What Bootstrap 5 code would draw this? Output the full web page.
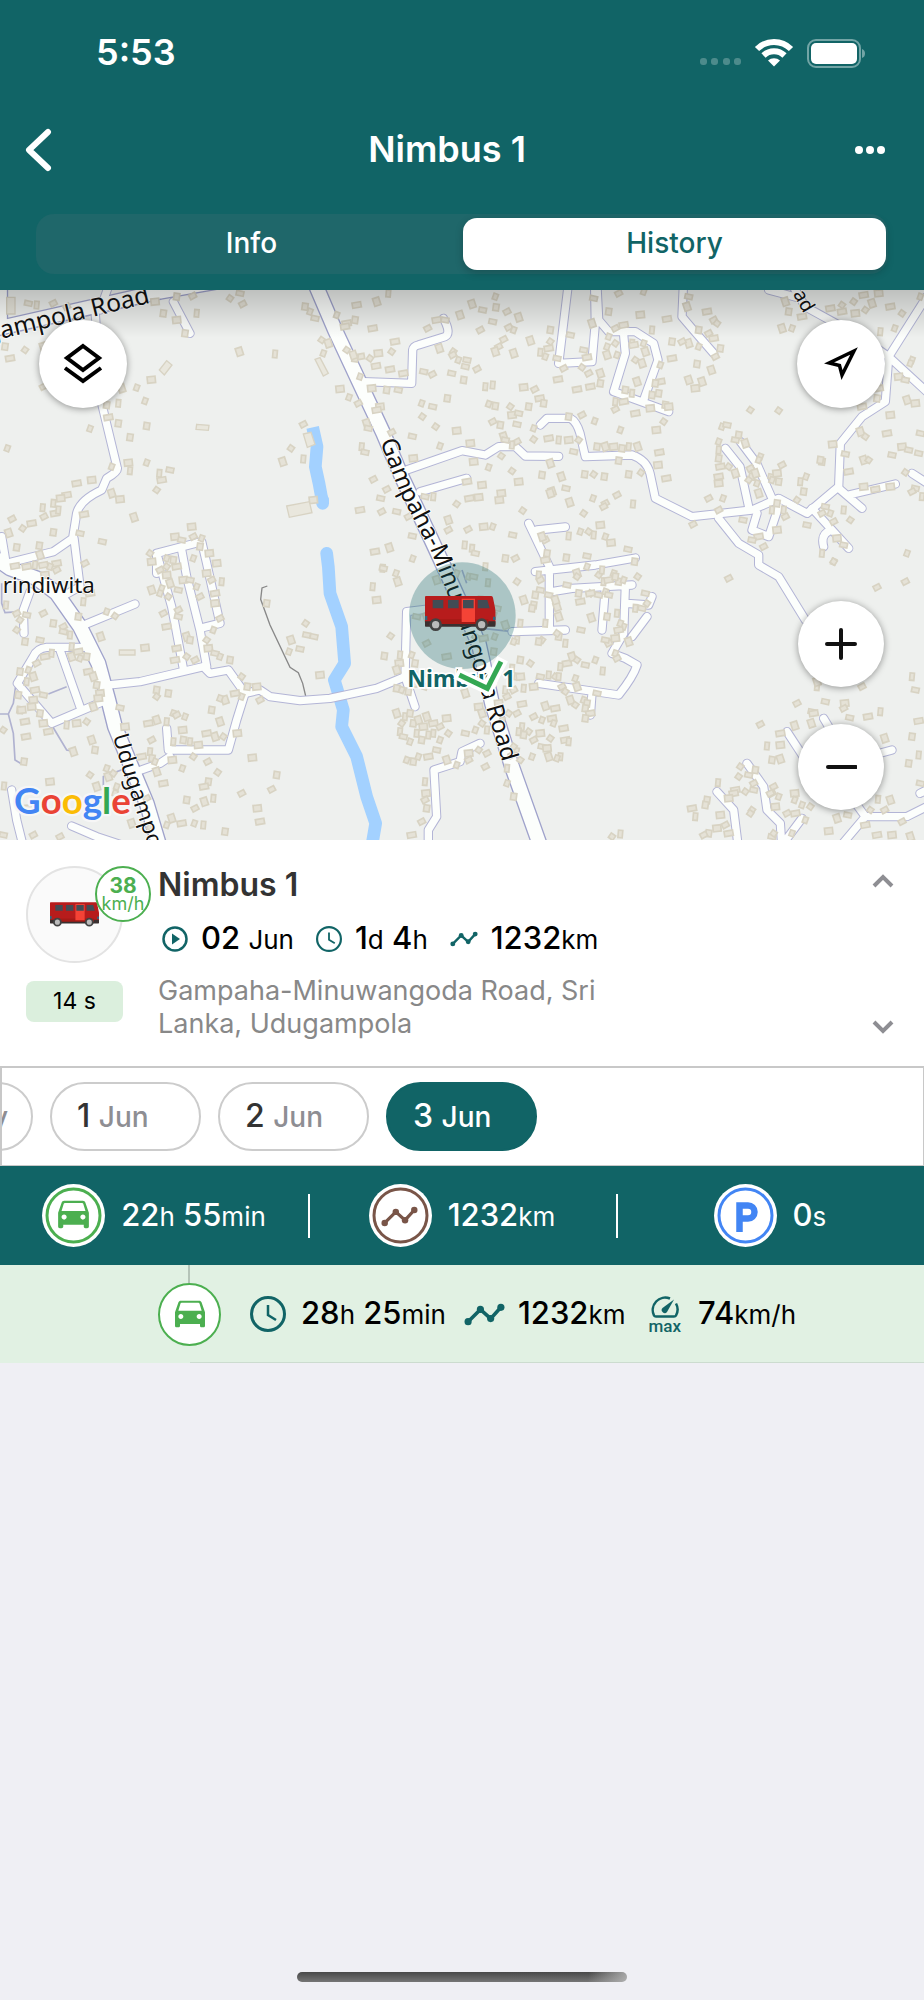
<!DOCTYPE html>
<html lang="en">
<head>
<meta charset="utf-8">
<meta name="viewport" content="width=device-width, initial-scale=1">
<title>Nimbus 1 – History</title>
<link href="https://cdn.jsdelivr.net/npm/bootstrap@5.3.0/dist/css/bootstrap.min.css" rel="stylesheet">
<style>
:root { --teal: #116466; --green: #4caf50; --line: #c8c8c8; }
body { font-family: Inter, "Liberation Sans", sans-serif; background: #efeff4; color: #000; min-height: 100vh; line-height: 1.2; }
svg { display: block; flex: none; }
.bg-teal { background: var(--teal); }
.status-row { height: 106px; padding: 0 58px 0 96px; font-size: 36px; font-weight: 600; }
.title-row { height: 88px; padding: 0 38px 0 24px; }
.title-row h1 { font-size: 36px; font-weight: 600; margin: 0 12px 0 0; }
.bare { background: none; border: 0; padding: 0; color: inherit; }
.segments-wrap { padding: 20px 36px 16px; }
.segments { padding: 4px 2px 4px 4px; height: 60px; border-radius: 18px; background: #1f676a; }
.segments button { border: 0; border-radius: 14px; font-size: 28px; font-weight: 500; background: none; color: #fff; flex: 1 1 0; }
.segments button.active { background: #fff; color: var(--teal); box-shadow: 0 3px 8px rgba(0,0,0,.2); }
.map-view { height: 550px; background: #eef0ee; }
.map-view > svg { width: 100%; height: 100%; }
.map-shade { height: 48px; background: linear-gradient(rgba(0,0,0,.2), rgba(0,0,0,0)); }
.map-controls { padding: 30px 39px; }
.round-btn { width: 88px; height: 88px; border: 0; border-radius: 50%; background: #fff; box-shadow: 0 1px 7px rgba(0,0,0,.4); }
.zoom-btn { width: 86px; height: 86px; }
.zoom-btn + .zoom-btn { margin-top: 37px; }
.unit-card { padding: 26px 26px 0 26px; height: 226px; }
.unit-side { width: 132px; }
.avatar { width: 97px; height: 97px; border: 2px solid #e3e3e3; background: #fafafa; }
.speed { width: 56px; height: 56px; border: 2px solid var(--green); color: var(--green); background: #fff; left: 69px; top: 0; font-size: 21px; line-height: 19px; }
.speed span { font-size: 18px; line-height: 18px; }
.age { margin-top: 18px; height: 41px; width: 97px; border-radius: 8px; background: #dbefdd; font-size: 23px; }
.unit-name { font-size: 32px; line-height: 38px; font-weight: 600; color: #333; }
.facts { font-size: 31px; font-weight: 500; margin-top: 15px; line-height: 38px; gap: 22px; padding-left: 4px; }
.facts > span { gap: 13px; }
.facts small, .stat small { font-weight: 400; font-size: 26px; }
.address { font-size: 27px; line-height: 33px; color: #888; margin-top: 15px; max-width: 480px; }
.days { height: 100px; border: 2px solid var(--line); border-bottom-width: 1px; border-right-width: 1px; gap: 17px; }
.day { width: 151px; height: 69px; border: 2px solid #ccc; border-radius: 35px; background: #fff; color: #333; font-size: 32px; font-weight: 500; text-align: left; padding: 0 0 0 25px; flex: none; white-space: nowrap; }
.day:first-child { margin-left: -120px; }
.day small { font-size: 28px; font-weight: 500; color: #8e8e93; }
.day.active { background: var(--teal); border-color: var(--teal); color: #fff; }
.day.active small { color: #fff; }
.totals { height: 99px; color: #fff; }
.stat { font-size: 31px; font-weight: 500; white-space: nowrap; line-height: 38px; }
.sep { width: 2px; height: 44px; background: #fff; right: -2px; top: 50%; transform: translateY(-50%); }
.trip { height: 98px; background: #e1f1e3; padding-left: 158px; }
.trip::after { content: ""; position: absolute; left: 190px; right: 0; bottom: 0; height: 1px; background: #ccdccf; }
.trip::before { content: ""; position: absolute; left: 188px; top: 0; width: 2px; height: 20px; background: #b5c4b8; }
.trip-badge { width: 63px; height: 63px; border: 2px solid var(--green); background: #fff; }
.trip-clock { margin: 0 15px 0 29px; }
.trip-trend { margin: 0 13px 0 18px; }
.trip-max { margin: 0 17px 0 23px; }
.max-label { font-family: Roboto, sans-serif; font-size: 17px; font-weight: 500; line-height: 14px; color: var(--teal); }
.home-bar { width: 330px; height: 10px; border-radius: 5px; margin-bottom: 18px; background: linear-gradient(100deg, transparent 88%, rgba(190,190,190,.8)), linear-gradient(#484848, #757575); }
</style>
</head>
<body class="d-flex flex-column">

<svg width="0" height="0" class="position-absolute" aria-hidden="true">
  <defs>
    <symbol id="bus" viewBox="0 0 212 106">
      <path d="M3 0H199q4 0 5 5L212 45V86H0V3q0-3 3-3Z" fill="#b71c1c"/>
      <path d="M0 76H212V90q0 2-3 2H2q-2 0-2-3Z" fill="#3a3030"/>
      <path d="M20 70H190V84H20Z" fill="#a51a16"/>
      <path d="M110 8H150V78H110Z" fill="#f44336"/>
      <path d="M23 12H55V37H23ZM69 12H101V37H69ZM114 12H146V37H114ZM158 12H187L194 37H158Z" fill="#424c55"/>
      <path d="M0 60h7v12H0ZM204 62h8v10h-8Z" fill="#37627a"/>
      <circle cx="32" cy="86" r="15" fill="#bbb" stroke="#424242" stroke-width="8"/>
      <circle cx="170" cy="86" r="15" fill="#bbb" stroke="#424242" stroke-width="8"/>
    </symbol>
    <symbol id="car" viewBox="0 0 24 24">
      <path fill="#4caf50" d="M18.92 5.01C18.72 4.42 18.16 4 17.5 4h-11c-.66 0-1.21.42-1.42 1.01L3 11v8c0 .55.45 1 1 1h1c.55 0 1-.45 1-1v-1h12v1c0 .55.45 1 1 1h1c.55 0 1-.45 1-1v-8l-2.080-5.990zM6.500 15c-.83 0-1.500-.67-1.500-1.500S5.670 12 6.500 12s1.500.67 1.500 1.500S7.330 15 6.500 15zm11 0c-.83 0-1.500-.67-1.500-1.500s.67-1.500 1.500-1.500 1.500.67 1.500 1.500-.67 1.500-1.500 1.500zM5 10l1.300-4.300q.15-.5.700-.5h10q.55 0 .7.500L19 10H5z"/>
    </symbol>
    <symbol id="trend" viewBox="0 0 40 22">
      <path d="M4 18 16 6 26 15 36 4" fill="none" stroke="currentColor" stroke-width="3.500"/>
      <g fill="currentColor"><circle cx="4" cy="18" r="3.500"/><circle cx="16" cy="6" r="3.500"/><circle cx="26" cy="15" r="3.500"/><circle cx="36" cy="4" r="3.500"/></g>
    </symbol>
    <symbol id="clock" viewBox="0 0 36 36">
      <circle cx="18" cy="18" r="16.500" fill="none" stroke="currentColor" stroke-width="3"/>
      <path d="M18 9V19L26 24" fill="none" stroke="currentColor" stroke-width="2.500"/>
    </symbol>
  </defs>
</svg>

<header class="bg-teal text-white">
  <div class="status-row d-flex align-items-center justify-content-between">
    <span>5:53</span>
    <svg width="168" height="30" viewBox="0 0 168 30" aria-label="Wi-Fi and battery">
      <g fill="#4d8b8c"><rect x="2" y="20" width="7" height="7" rx="3"/><rect x="13" y="20" width="7" height="7" rx="3"/><rect x="25" y="20" width="7" height="7" rx="3"/><rect x="36" y="20" width="7" height="7" rx="3"/></g>
      <g fill="none" stroke="#fff" stroke-width="6"><path d="M59 11a24 24 0 0 1 34 0"/><path d="M65.500 17.500a15 15 0 0 1 21 0"/></g>
      <path d="M76 28.500 70 22.500a9 9 0 0 1 12 0Z" fill="#fff"/>
      <rect x="110" y="2" width="52" height="27" rx="8" fill="none" stroke="#73a5a6" stroke-width="2"/>
      <rect x="113" y="5" width="46" height="21" rx="5" fill="#fff"/>
      <path d="M164 11q3 1 3 4.500t-3 4.500Z" fill="#73a5a6"/>
    </svg>
  </div>
  <div class="title-row d-flex align-items-center justify-content-between">
    <button class="bare" type="button" aria-label="Back"><svg width="28" height="44" viewBox="0 0 28 44"><path d="M24 4 5 22 24 40" fill="none" stroke="#fff" stroke-width="6" stroke-linecap="round" stroke-linejoin="round"/></svg></button>
    <h1>Nimbus 1</h1>
    <button class="bare" type="button" aria-label="More"><svg width="32" height="10" viewBox="0 0 32 10" fill="#fff"><circle cx="5" cy="5" r="4"/><circle cx="16" cy="5" r="4"/><circle cx="27" cy="5" r="4"/></svg></button>
  </div>
  <div class="segments-wrap">
    <div class="segments d-flex"><button type="button">Info</button><button type="button" class="active">History</button></div>
  </div>
</header>

<section class="map-view position-relative overflow-hidden">
  <svg viewBox="0 0 2772 1650" preserveAspectRatio="xMidYMid slice" aria-label="Map">
    <defs>
      <g id="main-roads">
        <path d="M945-20 1005 120 1075 270 1150 430 1205 560 1290 740 1350 870 1436 1060 1476 1240 1536 1430 1625 1680"/>
        <path d="M-20 800 30 835 110 865 170 910 240 1010 295 1120 325 1230 345 1310 390 1420 440 1540 485 1690"/>
        <path d="M-20 118 280 50 480 5 680-30M0-20V100"/>
      </g>
      <g id="mid-roads">
        <path d="M285 60 305 340 352 535Q355 545 320 565L305 600Q240 630 230 670L218 745 160 785 20 820M222 745 240 890 195 915M5 740 20 830"/>
        <path d="M325 1185 420 1175 610 1130 630 1150 685 1140 735 1210 780 1200 810 1220 900 1232 990 1225 1130 1195 1215 1160"/>
        <path d="M735 1210 710 1290 685 1380H505L500 1315M510 1400 480 1420 410 1445M240 1010 405 942"/>
        <path d="M250 1072H140Q110 1075 100 1100L52 1180 155 1300 320 1230M180 1080 240 1250M35 1500 50 1590 70 1670M215 1608 290 1640 380 1670"/>
        <path d="M1215 1160 1220 965 1300 955M1215 1160 1245 1250M1440 1360 1386 1385 1380 1415 1302 1440 1310 1580 1285 1620V1680"/>
        <path d="M1090 275 1235 280 1238 180Q1240 168 1255 165L1335 140Q1355 130 1330 85M1220 540 1386 482 1456 495 1496 470H1546L1576 498 1676 499M1260 605 1400 565"/>
        <path d="M1704-10 1676 220 1776 215 1786 100 1784-10M1791-10 1796 90 1826 125 1906 125 1961 160 1974 210 1931 330M1871 135 1876 190 1841 305 2006 365"/>
        <path d="M2050-10 2046 80 2080 120 2141 190M1621 405 1641 385H1711Q1730 395 1740 430L1756 500 1896 495Q1940 510 1950 550L1966 625 2076 680 2256 660 2336 625 2421 670 2516 590 2521 460 2586 380 2656 335 2666 200 2780 20M2666 200 2780 305M2666 200 2580 140 2416 50 2380-10M2306 0 2390 22"/>
        <path d="M2246 650 2220 530 2176 475M2316 625 2270 520 2221 455M2156 685 2216 760 2276 795V825L2336 860 2416 990M2271 670 2256 720 2306 740 2336 650M2516 595 2586 655M2546 615 2686 582M2436 655 2496 720 2546 775M2496 720Q2460 730 2471 770M2736 550 2790 585"/>
        <path d="M1586 700 1648 830V1010M1611 720 1696 711M1606 845 1786 825 1906 804M1656 905 1716 895 1896 885M1536 1025 1696 1020M1816 895 1806 1020M1876 890 1871 1030 1836 1090 1876 1105 1911 1125Q1900 1160 1856 1215L1616 1180M1776 1210 1771 1275M1881 940 1946 945 1956 920M1896 1040 1941 980"/>
        <path d="M2241 1420 2291 1490 2301 1560 2341 1600 2346 1680M2151 1505 2201 1560 2216 1680M2350 1660 2406 1585M2361 1325 2410 1400M2471 1285 2510 1350M2560 1530 2596 1580 2520 1670M2596 1580H2720L2790 1545M2640 1390 2676 1380M2780 1500 2760 1510"/>
        <path d="M470 850V790L605 755 620 820 660 1000 600 1015M545 780 560 860 600 1020 620 1130M470 790 515 950 550 1135M520 35 570 130M90 905 70 960 72 1030M300 60 325-10"/>
      </g>
    </defs>
    <rect width="2772" height="1650" fill="#eef0ee"/>
    <g fill="none" stroke="#a3d1ff" stroke-width="38" stroke-linejoin="round">
      <path d="M938 412 951 470 946 530 957 580 968 640"/><path d="M968 630V640" stroke-linecap="round"/>
      <path stroke-linecap="round" d="M980 790 985 830 990 910 1025 1010 1034 1120 1003 1170 1030 1260 1025 1310 1070 1400 1100 1520 1127 1600 1115 1670"/>
    </g>
    <g fill="none" stroke="#b0b2d0" stroke-width="5"><path d="M0 1272H25L40 1330 45 1410 65 1422M48 1180 40 1240 25 1272M155 1305 200 1380 210 1382M145 1212 200 1190M5 880V940L15 968 60 965M390 1430 310 1460V1500M190 915 240 900M1300 955 1400 1010 1536 1025M1400 880 1386 840"/></g>
    <path d="M802 888 786 894 782 928 810 1005 870 1132 895 1148 908 1180 917 1218" fill="none" stroke="#888" stroke-width="4"/>
    <g fill="none" stroke-linejoin="round" stroke-linecap="round">
      <use href="#mid-roads" stroke="#b3b5d6" stroke-width="28"/>
      <use href="#main-roads" stroke="#9fa2cb" stroke-width="49"/>
      <use href="#mid-roads" stroke="#fcfefc" stroke-width="22"/>
      <use href="#main-roads" stroke="#fcfefc" stroke-width="41"/>
    </g>
    <g id="buildings" fill="#e5e2d7" stroke="#d8d3c3" stroke-width="5"></g>
    <g fill="#e9e7dd" stroke="#d8d3c3" stroke-width="4"><path d="M860 648 928 635 936 668 868 682ZM910 432 933 427 945 463 922 472ZM945 208 960 203 985 250 970 258ZM358 1080H405V1095H358ZM590 403 627 406 625 421 588 418ZM20 22H45V72H20ZM478 240 500 212 516 225 493 255Z"/></g>
    <g font-family="'Noto Sans', sans-serif" font-size="72" fill="#111" stroke="#fff" stroke-width="5" paint-order="stroke">
      <path id="gm" d="M1140 455 1200 610 1300 800 1380 1010 1458 1250 1520 1460" fill="none" stroke="none"/>
      <path id="ud" d="M338 1338 370 1450 455 1700 520 1900" fill="none" stroke="none"/>
      <path id="gp" d="M-38 157 480 31" fill="none" stroke="none"/>
      <text><textPath href="#gm">Gampaha-Minuwangoda Road</textPath></text>
      <text font-size="67"><textPath href="#ud">Udugampola</textPath></text>
      <text font-size="74"><textPath href="#gp">gampola Road</textPath></text>
      <text x="8" y="910" font-size="67">rindiwita</text>
      <text transform="translate(2378 12) rotate(60)" font-size="58">ad</text>
    </g>
    <circle cx="1387" cy="977" r="160" fill="#116466" fill-opacity=".3"/>
    <use href="#bus" x="1275" y="918" width="212" height="106"/>
    <text x="1222" y="1190" font-family="'Noto Sans', sans-serif" font-weight="700" font-size="69" fill="#116466" stroke="#fff" stroke-width="10" paint-order="stroke">Nimbus 1</text>
    <g fill="none"><path d="M1368 1150 1462 1195 1508 1106" stroke="#fff" stroke-width="36"/><path d="M1378 1155 1462 1195 1503 1115" stroke="#34a853" stroke-width="15"/></g>
    <text x="42" y="1571" font-family="Lato, sans-serif" font-weight="700" font-size="110" stroke="#f6f6f6" stroke-width="14" stroke-linejoin="round" paint-order="stroke"><tspan fill="#4285f4">G</tspan><tspan fill="#ea4335">o</tspan><tspan fill="#fbbc05">o</tspan><tspan fill="#4285f4">g</tspan><tspan fill="#34a853">l</tspan><tspan fill="#ea4335">e</tspan></text>
  </svg>
  <div class="map-shade position-absolute top-0 start-0 end-0"></div>
  <div class="map-controls position-absolute top-0 bottom-0 start-0 end-0 d-flex justify-content-between">
    <button class="round-btn d-flex align-items-center justify-content-center" type="button" aria-label="Layers"><svg width="40" height="42" viewBox="0 0 40 42" fill="none" stroke="#000" stroke-width="4"><path d="M20 3 36 15 20 27 4 15Z"/><path d="M2 25 20 38 38 25"/></svg></button>
    <div class="d-flex flex-column align-items-center">
      <button class="round-btn d-flex align-items-center justify-content-center" type="button" aria-label="My location"><svg width="34" height="34" viewBox="0 0 34 34"><path d="M30 4 18 28 15.500 18.500 5 16Z" fill="none" stroke="#000" stroke-width="3.500"/></svg></button>
      <button class="round-btn zoom-btn mt-auto d-flex align-items-center justify-content-center" type="button" aria-label="Zoom in"><svg width="32" height="32" viewBox="0 0 32 32"><path d="M2 16H30M16 2V30" stroke="#111" stroke-width="4" stroke-linecap="round"/></svg></button>
      <button class="round-btn zoom-btn d-flex align-items-center justify-content-center" type="button" aria-label="Zoom out"><svg width="32" height="32" viewBox="0 0 32 32"><path d="M3 16H31" stroke="#111" stroke-width="4" stroke-linecap="round"/></svg></button>
    </div>
  </div>
</section>

<section class="unit-card bg-white d-flex">
  <div class="unit-side position-relative flex-shrink-0">
    <div class="avatar rounded-circle d-flex align-items-center justify-content-center"><svg width="49" height="25"><use href="#bus"/></svg></div>
    <div class="speed rounded-circle position-absolute d-flex flex-column align-items-center justify-content-center"><b>38</b><span>km/h</span></div>
    <div class="age d-flex align-items-center justify-content-center">14 s</div>
  </div>
  <div class="flex-grow-1">
    <h2 class="unit-name m-0">Nimbus 1</h2>
    <div class="facts d-flex align-items-center">
      <span class="d-flex align-items-center"><svg width="26" height="26" viewBox="0 0 26 26"><circle cx="13" cy="13" r="11.500" fill="none" stroke="#116466" stroke-width="2.500"/><path d="M10 7.500 18 13 10 18.500Z" fill="#116466"/></svg><span>02 <small>Jun</small></span></span>
      <span class="d-flex align-items-center"><svg width="26" height="26" color="#116466"><use href="#clock"/></svg><span>1<small>d</small> 4<small>h</small></span></span>
      <span class="d-flex align-items-center"><svg width="28" height="18" color="#116466"><use href="#trend"/></svg><span>1232<small>km</small></span></span>
    </div>
    <div class="address">Gampaha-Minuwangoda Road, Sri Lanka, Udugampola</div>
  </div>
  <div class="d-flex flex-column justify-content-between">
    <button class="bare" type="button" aria-label="Collapse"><svg width="30" height="30" viewBox="0 0 30 30"><path d="M6 20 15 11 24 20" fill="none" stroke="#8e8e93" stroke-width="4"/></svg></button>
    <button class="bare mb-4" type="button" aria-label="Expand"><svg width="30" height="30" viewBox="0 0 30 30"><path d="M6 10 15 19 24 10" fill="none" stroke="#8e8e93" stroke-width="4"/></svg></button>
  </div>
</section>

<nav class="days bg-white d-flex align-items-center overflow-hidden">
  <button class="day" type="button">31 <small>May</small></button>
  <button class="day" type="button">1 <small>Jun</small></button>
  <button class="day" type="button">2 <small>Jun</small></button>
  <button class="day active" type="button">3 <small>Jun</small></button>
</nav>

<section class="totals bg-teal row g-0">
  <div class="col-4 d-flex align-items-center justify-content-center gap-3 position-relative">
    <svg width="63" height="63" viewBox="0 0 63 63"><circle cx="31.500" cy="31.500" r="31.500" fill="#fff"/><circle cx="31.500" cy="31.500" r="26.500" fill="none" stroke="#4caf50" stroke-width="3"/><use href="#car" x="11" y="10" width="41" height="41"/></svg>
    <span class="stat">22<small>h</small> 55<small>min</small></span><i class="sep position-absolute"></i>
  </div>
  <div class="col-4 d-flex align-items-center justify-content-center gap-3 position-relative">
    <svg width="63" height="63" viewBox="0 0 63 63" color="#795548"><circle cx="31.500" cy="31.500" r="31.500" fill="#fff"/><circle cx="31.500" cy="31.500" r="26.500" fill="none" stroke="currentColor" stroke-width="3"/><use href="#trend" x="12" y="22" width="37" height="21"/></svg>
    <span class="stat">1232<small>km</small></span><i class="sep position-absolute"></i>
  </div>
  <div class="col-4 d-flex align-items-center justify-content-center gap-3">
    <svg width="63" height="63" viewBox="0 0 63 63"><circle cx="31.500" cy="31.500" r="31.500" fill="#fff"/><circle cx="31.500" cy="31.500" r="26.500" fill="none" stroke="#4285f4" stroke-width="3"/><path d="M25.500 48V21.500H34a6.500 6.500 0 0 1 0 13H25.500" fill="none" stroke="#4285f4" stroke-width="6.500"/></svg>
    <span class="stat">0<small>s</small></span>
  </div>
</section>

<section class="trip position-relative d-flex align-items-center">
  <span class="trip-badge rounded-circle d-flex align-items-center justify-content-center position-relative"><svg width="40" height="40"><use href="#car"/></svg></span>
  <svg class="trip-clock" width="36" height="36" color="#116466"><use href="#clock"/></svg>
  <span class="stat">28<small>h</small> 25<small>min</small></span>
  <svg class="trip-trend" width="41" height="23" color="#116466"><use href="#trend"/></svg>
  <span class="stat">1232<small>km</small></span>
  <span class="trip-max d-flex flex-column align-items-center"><svg width="30" height="24" viewBox="0 0 30 24" fill="none" stroke="#116466" stroke-width="2.500"><path d="M20 3.500A12.500 12.500 0 0 0 4 20.500Q4.500 21.500 6 21.500H24Q25.500 21.500 26 20.500A12.500 12.500 0 0 0 26 8.500"/><path d="M24 4.500 17 17A3 3 0 0 1 12.500 13Z" fill="#116466" stroke="none"/></svg><span class="max-label">max</span></span>
  <span class="stat">74<small>km/h</small></span>
</section>

<div class="home-bar mt-auto mx-auto"></div>

<script>
// Building footprints of the four map tiles: tile origin, then x,y pairs
const tiles = [
 [0, -30, "85,70 110,75 160,70 200,80 75,210 30,235 15,200 130,200 130,320 465,65 490,100 530,50 578,48 590,100 530,120 555,160 690,55 720,40 728,72 718,215 825,222 410,323 454,299 365,325 355,370 435,363 320,375 325,412 355,430 440,438 390,472 270,446 22,505 440,548 385,548 390,572 335,560 230,610 275,600 478,580 485,600 510,570 470,630 200,645 182,655 160,670 128,683 335,640 360,658 132,710 165,700 175,690 36,717 26,759 68,745 95,730 252,703 402,712 160,757 240,760 307,785 118,797 50,802 120,825 255,850 45,858 130,855 170,850 575,740 525,770 545,780 580,770 605,775 450,820 455,845 500,835 520,840 580,835 600,800 628,820 650,850 500,860 873,505 848,545 910,537 940,660 910,433 915,80 930,95 945,115 1010,105 1040,130 1035,140 1065,120 1070,75 1130,65 1165,40 1118,145 1185,185 1175,215 1135,220 1080,230 1065,235 1110,235 1128,258 965,180 985,190 970,220 1040,210 1060,225 1170,268 1210,280 1080,290 1115,325 1020,327 1047,352 1075,370 1140,380 1130,390 1160,330 1195,330 1271,275 1297,283 1283,145 1318,205 1360,215 1380,105 1310,120 1335,120 1265,370 1298,380 1267,410 1307,440 1342,355 1370,452 1237,469 1320,498 1100,430 1105,445 1085,500 1095,517 1175,457 1240,535 1120,598 1160,628 1142,655 1080,690 1145,695 1190,695 1225,710 1370,672 1345,720 1345,750 1237,768 1168,803 1125,815 1238,836 1148,865 1275,650 1300,650 1355,280 1375,240 1358,225"],
 [1386, -30, "30,72 62,90 100,50 102,82 92,125 55,150 140,142 135,95 170,112 125,178 205,182 155,220 110,200 100,215 15,240 10,260 45,267 5,300 70,320 92,315 185,322 218,328 233,355 200,380 80,372 100,378 145,380 150,405 170,400 165,433 92,425 115,435 245,370 215,445 25,490 125,470 130,480 165,485 150,495 215,478 260,475 35,545 80,562 150,573 15,605 60,615 118,640 50,652 22,655 112,660 170,605 240,585 265,550 118,528 155,150 265,150 265,185 235,217 260,205 285,235 325,165 365,210 375,232 305,265 360,262 288,298 380,280 415,280 345,328 385,320 415,310 250,230 390,130 395,55 440,95 470,40 485,135 460,145 440,170 435,200 460,190 435,225 465,225 510,190 545,190 550,215 520,240 540,250 515,195 570,150 525,305 490,330 510,340 460,365 485,365 460,388 520,400 565,385 590,340 595,305 580,310 595,255 570,345 610,375 620,380 605,425 583,450 475,450 405,500 430,500 455,500 480,505 500,500 527,500 592,517 360,405 320,410 398,423 290,480 320,480 350,480 335,515 470,542 588,555 537,578 500,583 613,595 427,590 368,583 395,583 298,590 312,625 270,635 265,640 323,667 365,700 393,655 430,670 425,680 465,645 513,672 182,692 18,748 65,740 92,740 152,765 250,780 240,770 320,768 355,755 380,755 395,765 430,770 447,788 415,735 498,808 255,820 313,833 375,828 250,840 8,795 30,805 40,820 130,835 160,835 545,35 535,104 615,117 675,80 680,50 735,95 755,120 765,130 710,150 740,160 755,175 680,190 710,200 775,205 760,230 630,185 660,185 630,235 705,252 748,270 680,300 720,305 700,325 865,390 950,392 780,440 795,435 770,485 770,510 830,465 820,480 850,490 770,535 775,560 770,590 770,610 800,560 820,580 865,565 870,590 885,610 890,640 860,600 880,580 930,590 945,580 960,555 895,530 890,540 930,600 950,605 1015,605 1032,590 1025,635 740,655 783,655 843,720 770,690 693,733 930,690 945,670 965,690 970,710 945,750 890,770 870,780 905,800 1005,660 1035,735 1080,545 1075,540 1112,493 1150,522 1160,575 1205,620 1240,628 1285,620 1205,540 1220,540 1195,455 1210,470 1245,355 1250,325 1200,380 1255,155 1285,405 1275,460 1320,500 1340,510 1290,525 1375,460 1370,520 1330,577 1360,625 1350,635 1380,650 1335,360 1360,370 1310,290 1330,300 1350,240 1345,250 1285,80 1320,100 1375,50 1298,145 970,65 980,95 960,145 990,145 1020,110 1105,85 1140,75 1140,95 1175,65 1180,100 1210,90 1230,70 1205,45 1250,40 1090,680 1080,700 1105,700 1115,725 1145,690 1165,720 1125,775 1145,795 1080,820 1115,845 1335,820"],
 [0, 810, "170,30 150,20 105,15 135,45 80,20 18,135 50,160 60,180 130,160 50,210 80,165 120,240 75,245 160,190 190,200 190,215 235,170 210,225 250,125 260,95 270,100 320,155 345,168 302,230 435,263 215,260 215,290 235,275 240,295 260,290 265,335 280,350 290,375 300,400 295,415 360,443 375,500 155,280 135,290 110,310 100,350 85,330 60,335 80,365 105,390 130,405 100,420 95,440 120,460 130,490 75,485 60,450 55,405 10,510 145,515 200,495 230,490 260,485 280,440 275,540 285,570 220,575 78,530 72,605 480,30 500,45 510,70 530,20 455,90 485,85 480,100 505,110 535,90 550,60 570,60 590,80 600,110 620,40 635,60 665,65 645,100 645,130 660,175 640,210 620,240 625,265 645,280 690,300 660,290 535,150 535,170 500,200 560,230 570,240 530,265 525,300 560,290 585,300 490,160 725,350 742,380 770,380 725,410 780,420 705,400 675,420 660,415 635,450 660,485 712,520 670,530 645,530 620,520 470,390 470,410 505,400 520,460 530,465 555,470 470,480 445,490 500,485 548,510 455,540 550,540 570,545 520,545 595,555 580,590 623,605 517,600 450,575 456,595 425,590 547,625 653,637 625,665 612,680 640,715 613,725 560,720 725,700 585,745 583,790 610,795 545,790 515,775 500,795 450,800 830,645 815,688 772,745 780,785 675,815 757,593 800,130 917,190 920,225 942,230 873,240 867,275 900,267 960,345 1118,80 1130,120 1150,25 1188,40 1193,65 1172,228 1153,288 1200,285 1235,285 1198,310 1190,330 1245,310 1240,345 1190,385 1205,390 1225,395 1245,370 1275,340 1275,380 1190,460 1205,490 1240,490 1215,470 1230,460 1255,480 1200,515 1210,530 1270,500 1280,470 1300,490 1320,500 1340,475 1300,520 1250,520 1265,540 1285,525 1320,540 1345,520 1220,600 1240,605 1255,590 1285,590 1310,570 1340,600 1370,615 1230,545 1275,665 1278,700 1275,720 1280,745 1265,785 1235,825 12,678 150,665 270,645 290,680 320,625 325,650 340,640 350,680 345,700 395,790 440,715 465,605 470,635 490,670 85,745 100,825 10,825 180,830 65,450 1370,40 1250,170 1280,170 1280,250 1340,290 1310,60"],
 [1386, 810, "20,50 35,50 78,68 55,120 80,160 105,145 98,230 65,235 95,275 70,20 20,185 40,230 95,165 165,65 185,120 175,190 130,195 165,240 155,245 220,105 215,135 210,145 230,45 235,60 235,90 240,240 230,245 250,190 260,105 290,170 285,140 280,120 290,230 310,250 285,220 315,75 345,40 375,20 350,100 355,125 345,50 385,100 385,100 410,105 430,95 410,45 425,65 420,30 455,40 440,60 470,65 485,60 460,50 518,5 527,50 440,105 465,160 435,170 388,173 357,210 485,200 470,210 475,190 440,250 460,235 460,280 430,240 465,295 500,245 550,100 555,130 540,145 520,145 175,300 150,325 165,350 175,350 205,310 235,350 260,345 280,350 295,320 290,350 315,310 330,290 345,300 400,300 370,315 422,333 340,355 345,380 300,380 310,395 365,420 325,420 340,435 375,430 370,445 405,400 280,445 250,438 180,432 155,390 185,385 215,380 130,390 135,410 110,430 140,460 165,460 50,440 60,460 10,400 40,510 10,520 60,490 75,510 215,470 240,480 270,475 275,490 305,505 180,500 200,515 170,515 185,525 215,540 235,520 265,535 310,540 320,545 240,560 255,565 210,590 260,590 295,590 285,595 175,600 160,570 150,585 135,625 155,560 120,480 20,580 50,570 75,580 70,620 20,600 135,670 155,710 385,460 370,475 895,493 800,55 1245,82 1330,65 1115,5 1005,430 1050,455 1090,425 1055,460 1065,380 1065,365 1200,380 1148,430 1145,445 1163,473 1218,470 1255,455 1048,490 998,497 955,520 955,555 915,558 930,600 955,597 1350,350 1360,390 1370,483 1268,535 1350,530 1370,585 1340,610 1375,670 880,630 835,620 830,650 860,645 768,668 820,690 815,700 850,695 875,670 875,690 800,715 735,720 730,735 690,745 700,770 775,765 790,795 765,805 800,820 740,820 725,825 870,750 865,760 935,680 930,700 925,700 950,710 940,740 998,700 998,720 1020,735 1045,740 1000,760 975,760 930,830 935,820 990,820 1030,780 1125,775 1157,765 1225,750 1268,750 1285,720 1248,718 1210,795 1320,785 1245,825 1290,825 1345,830 1100,813 475,822 450,830"]
];
const sizes = [[17,20,8],[26,16,-10],[14,18,20],[19,24,-18],[22,14,12],[16,16,35],[24,19,-6],[13,22,5],[20,15,-28]];
let markup = "";
tiles.forEach(([ox, oy, list]) => list.split(" ").forEach((pair, i) => {
  const [x, y] = pair.split(",").map(Number);
  const [w, h, turn] = sizes[(i * 5 + x) % sizes.length];
  markup += `<rect x="${-w / 2}" y="${-h / 2}" width="${w}" height="${h}" transform="translate(${x + ox} ${y + oy}) rotate(${turn})"/>`;
}));
document.getElementById("buildings").innerHTML = markup;
</script>
<script src="https://cdn.jsdelivr.net/npm/bootstrap@5.3.0/dist/js/bootstrap.bundle.min.js"></script>
</body>
</html>
